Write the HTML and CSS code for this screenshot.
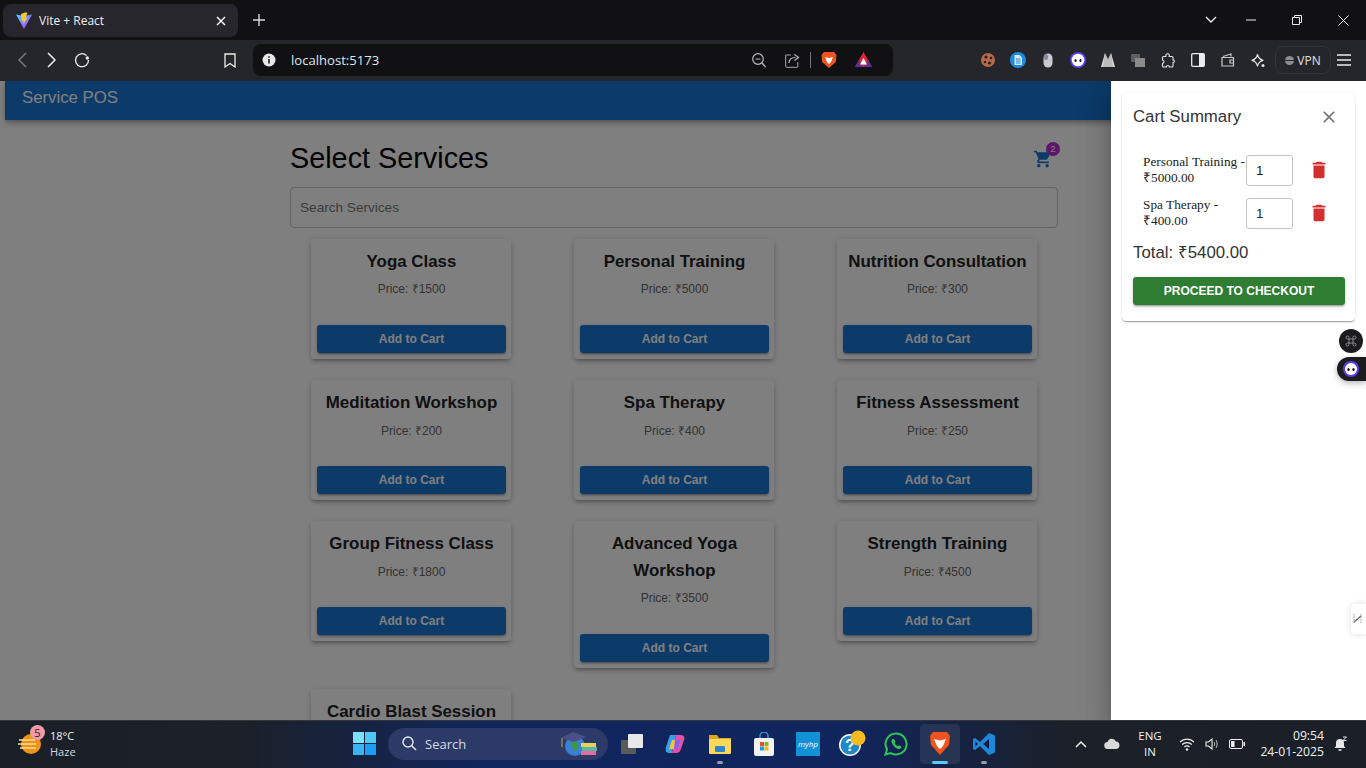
FILE: index.html
```html
<!DOCTYPE html>
<html lang="en">
<head>
    <meta charset="UTF-8">
    <title>Vite + React</title>
    <link rel="stylesheet" href="styles.css">
</head>
<body>

<!-- browser tab strip -->
<div class="tabstrip">
    <div class="tab">
        <svg class="favicon" width="18" height="18" viewBox="0 0 18 18">
            <defs>
                <linearGradient id="viteA" x1="0" y1="0" x2="1" y2="1"><stop offset="0" stop-color="#41d1ff"/><stop offset="1" stop-color="#bd34fe"/></linearGradient>
            </defs>
            <path d="M1 2.500 9 4l8-1.500-8 14.500z" fill="url(#viteA)"/>
            <path d="M10 .5 6 2l.8 7 1.700-.5-.3 3.500L12.500 6l-2 .3L12.500.8z" fill="#ffc928"/>
        </svg>
        <span class="tab-title">Vite + React</span>
        <svg class="tab-close" width="10" height="10" viewBox="0 0 10 10"><path d="M1 1l8 8M9 1l-8 8" stroke="#fff" stroke-width="1.500"/></svg>
    </div>
    <svg class="tab-new" width="12" height="12" viewBox="0 0 12 12"><path d="M6 0v12M0 6h12" stroke="#d8d8d8" stroke-width="1.400"/></svg>
    <div class="win-controls">
        <span class="win-btn win-chevron"><svg width="12" height="8" viewBox="0 0 12 8"><path d="M1 1l5 5 5-5" fill="none" stroke="#eee" stroke-width="1.400"/></svg></span>
        <span class="win-btn win-min"><svg width="10" height="2" viewBox="0 0 10 2"><path d="M0 1h10" stroke="#eee"/></svg></span>
        <span class="win-btn win-max"><svg width="10" height="10" viewBox="0 0 10 10"><path d="M.5 2.500h7v7h-7zM2.500 2.500V.5h7v7h-2" fill="none" stroke="#eee"/></svg></span>
        <span class="win-btn win-close"><svg width="11" height="11" viewBox="0 0 11 11"><path d="M.5.5l10 10M10.500.5l-10 10" stroke="#eee"/></svg></span>
    </div>
</div>

<!-- browser toolbar -->
<div class="toolbar">
    <span class="tool"><svg width="10" height="16" viewBox="0 0 10 16"><path d="M9 1 2 8l7 7" fill="none" stroke="#77787c" stroke-width="1.500"/></svg></span>
    <span class="tool"><svg width="10" height="16" viewBox="0 0 10 16"><path d="M1 1l7 7-7 7" fill="none" stroke="#ececec" stroke-width="1.500"/></svg></span>
    <span class="tool"><svg width="16" height="16" viewBox="0 0 16 16"><path d="M12.500 3.500A6.500 6.500 0 1 0 14.500 8" fill="none" stroke="#ececec" stroke-width="1.300"/><circle cx="13.300" cy="6" r="1.700" fill="#ececec"/></svg></span>
    <span class="tool tool-bookmark"><svg width="12" height="15" viewBox="0 0 12 15"><path d="M1 1h10v13L6 10.500 1 14z" fill="none" stroke="#ececec" stroke-width="1.300"/></svg></span>

    <div class="urlbar">
        <svg class="url-info" width="14" height="14" viewBox="0 0 14 14"><circle cx="7" cy="7" r="6.500" fill="#e8e8e8"/><path d="M7 6v4.500M7 3.300v1.500" stroke="#111" stroke-width="1.500"/></svg>
        <span class="url-text">localhost:5173</span>
        <svg class="url-zoom" width="14" height="15" viewBox="0 0 14 15"><circle cx="6" cy="6" r="5.300" fill="none" stroke="#bbb" stroke-width="1.200"/><path d="M3.500 6h5M10 10l3.500 4" stroke="#bbb" stroke-width="1.200"/></svg>
        <svg class="url-share" width="15" height="15" viewBox="0 0 15 15"><path d="M6 2H1.500A.8.8 0 0 0 .7 3v10.500c0 .5.4.8.8.8h10.500c.5 0 .8-.4.8-.8V9" fill="none" stroke="#aaa" stroke-width="1"/><path d="M4 10c0-4 3-5.500 6.500-5.500M9.500 1.500l4 3-4 3" fill="none" stroke="#bbb" stroke-width="1.200"/></svg>
        <span class="url-sep"></span>
        <svg class="url-brave" width="16" height="18" viewBox="0 0 16 18"><path d="M3 1h10l2.500 3-.7 7L8 17 1.200 11 .5 4z" fill="#f1531f"/><path d="M4 6l4 1 4-1-2 5-2 2-2-2z" fill="#fff"/></svg>
        <svg class="url-rewards" width="17" height="16" viewBox="0 0 17 16"><path d="M8.500 0 17 15H0z" fill="#e0243f"/><path d="M0 15l4-7 4.500 7z" fill="#662d91"/><path d="M17 15l-4-7-4.500 7z" fill="#662d91"/><path d="M8.500 6 12 12.500H5z" fill="#fff"/></svg>
    </div>

    <div class="extensions">
        <span class="tool"><svg width="16" height="16" viewBox="0 0 16 16"><circle cx="8" cy="8" r="7" fill="#b36a48"/><circle cx="6" cy="5" r="1.500" fill="#2c1a12"/><circle cx="11" cy="6" r="1.300" fill="#2c1a12"/><circle cx="5" cy="10" r="1.300" fill="#2c1a12"/><circle cx="9.500" cy="11" r="1.500" fill="#2c1a12"/></svg></span>
        <span class="tool"><svg width="16" height="16" viewBox="0 0 16 16"><circle cx="8" cy="8" r="8" fill="#1f8ad8"/><path d="M4.500 3h5L12 5.500V13H4.500z" fill="#cfe7f8"/><path d="M6 7h4.500M6 9h4.500M6 11h4.500" stroke="#1f8ad8"/></svg></span>
        <span class="tool"><svg width="10" height="15" viewBox="0 0 10 15"><rect x=".5" y=".5" width="9" height="14" rx="4.500" fill="#c9c9cf"/><rect x="1" y="1" width="4" height="6" rx="2" fill="#8a8aa0"/></svg></span>
        <span class="tool"><svg width="16" height="16" viewBox="0 0 16 16"><circle cx="8" cy="8" r="8" fill="#5b3df0"/><circle cx="8" cy="8" r="6.300" fill="#fff"/><ellipse cx="5.500" cy="8.500" rx="1.100" ry="1.500" fill="#1a1a2a"/><ellipse cx="10.500" cy="8.500" rx="1.100" ry="1.500" fill="#1a1a2a"/></svg></span>
        <span class="tool"><svg width="14" height="14" viewBox="0 0 14 14"><path d="M4 0 0 14h6zM10 0l4 14H8z" fill="#d9d9d9"/><path d="M4 0l3 6 3-6 2 14H2z" fill="#bcbcbc"/></svg></span>
        <span class="tool"><svg width="14" height="13" viewBox="0 0 14 13"><rect width="9" height="8" fill="#5e5e5e"/><rect x="4" y="4" width="10" height="9" fill="#8a8a8a"/></svg></span>
        <span class="tool"><svg width="14" height="15" viewBox="0 0 14 15"><path d="M5 1.500c1-1.200 3-1 3.300.6L8.200 3.500H11c.7 0 1 .4 1 1v2.400c1.500-.4 2.200 2.500 0 2.800V13c0 .6-.4 1-1 1H8.300c.2-2-3-2-2.800 0H2.500c-.6 0-1-.4-1-1v-2.500c2-.2 2-3.300 0-3.500V4.500c0-.6.4-1 1-1h2.300z" fill="none" stroke="#e4e4e4" stroke-width="1.100"/></svg></span>
        <span class="tool"><svg width="14" height="14" viewBox="0 0 14 14"><rect x=".7" y=".7" width="12.600" height="12.600" rx="1" fill="none" stroke="#ececec" stroke-width="1.300"/><rect x="8" y="1" width="5" height="12" fill="#ececec"/></svg></span>
        <span class="tool"><svg width="14" height="14" viewBox="0 0 14 14"><path d="M2 3.500 10 1v2.500M1 4.500h11.500V13H1z" fill="none" stroke="#c8c8c8" stroke-width="1.200"/><path d="M13 7H9v3h4" fill="none" stroke="#c8c8c8" stroke-width="1.200"/></svg></span>
        <span class="tool"><svg width="14" height="15" viewBox="0 0 14 15"><path d="M6.500 1.500c.8 3.500 2.500 5 5.500 5.800-3 .8-4.700 2.300-5.500 5.700-.8-3.400-2.500-4.900-5.500-5.700 3-.8 4.700-2.300 5.500-5.800z" fill="none" stroke="#e4e4e4" stroke-width="1.200" stroke-linejoin="round"/><circle cx="12" cy="12.500" r="1.500" fill="#e4e4e4"/></svg></span>
    </div>
    <div class="vpn"><span class="vpn-dot"></span>VPN</div>
    <svg class="hamburger" width="14" height="12" viewBox="0 0 14 12"><path d="M0 1h14M0 6h14M0 11h14" stroke="#ececec" stroke-width="1.300"/></svg>
</div>

<!-- page in the browser -->
<div class="viewport">
    <div class="appbar">Service POS</div>

    <div class="container">
        <div class="page-head">
            <h1>Select Services</h1>
            <div class="cart-btn">
                <svg width="20" height="20" viewBox="0 0 24 24"><path fill="#1976d2" d="M7 18c-1.100 0-1.990.9-1.990 2S5.900 22 7 22s2-.9 2-2-.9-2-2-2zM1 2v2h2l3.600 7.590-1.350 2.450c-.16.28-.25.61-.25.96 0 1.100.9 2 2 2h12v-2H7.420c-.14 0-.25-.11-.25-.25l.03-.12.9-1.630h7.450c.75 0 1.410-.41 1.750-1.030l3.580-6.490c.08-.14.12-.31.12-.48 0-.55-.45-1-1-1H5.210l-.94-2H1zm16 16c-1.100 0-1.990.9-1.990 2s.89 2 1.990 2 2-.9 2-2-.9-2-2-2z"/></svg>
                <span class="cart-badge">2</span>
            </div>
        </div>

        <div class="search-box">Search Services</div>

        <div class="service-grid">
            <div class="service-card"><h3>Yoga Class</h3><p>Price: ₹1500</p><button>Add to Cart</button></div>
            <div class="service-card"><h3>Personal Training</h3><p>Price: ₹5000</p><button>Add to Cart</button></div>
            <div class="service-card"><h3>Nutrition Consultation</h3><p>Price: ₹300</p><button>Add to Cart</button></div>
            <div class="service-card"><h3>Meditation Workshop</h3><p>Price: ₹200</p><button>Add to Cart</button></div>
            <div class="service-card"><h3>Spa Therapy</h3><p>Price: ₹400</p><button>Add to Cart</button></div>
            <div class="service-card"><h3>Fitness Assessment</h3><p>Price: ₹250</p><button>Add to Cart</button></div>
            <div class="service-card"><h3>Group Fitness Class</h3><p>Price: ₹1800</p><button>Add to Cart</button></div>
            <div class="service-card"><h3>Advanced Yoga Workshop</h3><p>Price: ₹3500</p><button>Add to Cart</button></div>
            <div class="service-card"><h3>Strength Training</h3><p>Price: ₹4500</p><button>Add to Cart</button></div>
            <div class="service-card"><h3>Cardio Blast Session</h3></div>
        </div>
    </div>

    <div class="scrim"></div>

    <div class="drawer">
        <div class="cart-card">
            <div class="cart-head">
                <h2>Cart Summary</h2>
                <svg width="20" height="20" viewBox="0 0 24 24"><path fill="#757575" d="M19 6.410 17.590 5 12 10.590 6.410 5 5 6.410 10.590 12 5 17.590 6.410 19 12 13.410 17.590 19 19 17.590 13.410 12z"/></svg>
            </div>
            <div class="cart-item">
                <span class="item-name">Personal Training - ₹5000.00</span>
                <span class="qty">1</span>
                <svg class="item-delete" width="22" height="22" viewBox="0 0 24 24"><path fill="#d32f2f" d="M6 19c0 1.100.9 2 2 2h8c1.100 0 2-.9 2-2V7H6v12zM19 4h-3.500l-1-1h-5l-1 1H5v2h14V4z"/></svg>
            </div>
            <div class="cart-item">
                <span class="item-name">Spa Therapy - ₹400.00</span>
                <span class="qty">1</span>
                <svg class="item-delete" width="22" height="22" viewBox="0 0 24 24"><path fill="#d32f2f" d="M6 19c0 1.100.9 2 2 2h8c1.100 0 2-.9 2-2V7H6v12zM19 4h-3.500l-1-1h-5l-1 1H5v2h14V4z"/></svg>
            </div>
            <div class="cart-total">Total: ₹5400.00</div>
            <button class="checkout">PROCEED TO CHECKOUT</button>
        </div>
    </div>

    <!-- extension widgets floating over the page -->
    <div class="float-cmd"><svg width="12" height="12" viewBox="0 0 12 12"><path d="M4 4h4v4H4zM4 4H2.500a1.500 1.500 0 1 1 1.500-1.500zM8 4V2.500A1.500 1.500 0 1 1 9.500 4zM8 8h1.500A1.500 1.500 0 1 1 8 9.500zM4 8v1.500A1.500 1.500 0 1 1 2.500 8z" fill="none" stroke="#8a8a8a"/></svg></div>
    <div class="float-ghost"><svg width="16" height="16" viewBox="0 0 16 16"><circle cx="8" cy="8" r="8" fill="#5b3df0"/><circle cx="8" cy="8" r="6" fill="#fff"/><ellipse cx="5.500" cy="8.500" rx="1.200" ry="1.600" fill="#14141e"/><ellipse cx="10.500" cy="8.500" rx="1.200" ry="1.600" fill="#14141e"/></svg></div>
    <div class="float-tab"><svg width="9" height="12" viewBox="0 0 9 12"><path d="M1 1v10M8 1v10" stroke="#aaa" stroke-width="1.200" stroke-dasharray="1.500 1"/><path d="M1 9l7-6" stroke="#666" stroke-width="1.300"/></svg></div>
</div>

<!-- windows taskbar -->
<div class="taskbar">
    <div class="weather">
        <span class="weather-icon">
            <svg width="24" height="24" viewBox="0 0 24 24"><circle cx="13" cy="12" r="10" fill="#ee9314"/><path d="M1 8h16M0 12h18M2 16h16" stroke="#f9dc9c" stroke-width="1.500"/></svg>
            <span class="weather-badge">5</span>
        </span>
        <span class="weather-text"><span>18°C</span><span class="weather-sub">Haze</span></span>
    </div>
    <span class="start"><svg width="23" height="23" viewBox="0 0 23 23"><rect width="11" height="11" fill="#7de0fb"/><rect x="12" width="11" height="11" fill="#4fc8f8"/><rect y="12" width="11" height="11" fill="#37b6f6"/><rect x="12" y="12" width="11" height="11" fill="#1a9df2"/></svg></span>
    <div class="task-search">
        <svg width="15" height="15" viewBox="0 0 15 15"><circle cx="6" cy="6" r="5" fill="none" stroke="#e6e8ef" stroke-width="1.400"/><path d="M9.500 9.500 14 14" stroke="#e6e8ef" stroke-width="1.400"/></svg>
        <span>Search</span>
        <svg class="search-art" width="38" height="26" viewBox="0 0 38 26"><circle cx="15" cy="15" r="10" fill="#3b7ed8"/><path d="M10 12l6-2 3 5-4 6-2-4z" fill="#3d9a3a"/><path d="M1 7 13 1l13 5-12 5z" fill="#4a4f8c"/><path d="M2 7v9" stroke="#c8a24a"/><rect x="21" y="12" width="15" height="4" fill="#e8d35a"/><rect x="22" y="16" width="15" height="4" fill="#58b6a2"/><rect x="21" y="20" width="15" height="4" fill="#e86aa0"/></svg>
    </div>
    <div class="task-apps">
        <span class="app"><svg width="22" height="20" viewBox="0 0 22 20"><rect y="6" width="15" height="14" rx="1" fill="#5a5a5a"/><rect x="7" width="15" height="14" rx="1" fill="#e8e8e8"/></svg></span>
        <span class="app"><svg width="24" height="24" viewBox="0 0 24 24"><path d="M6 3h6l-4 18H5C2 21 1 18 2 15z" fill="#37a0e8"/><path d="M12 3h5c3 0 4 3 3 5l-3 9c-1 3-3 4-5 4H8z" fill="#e64fa8"/><path d="M8 8h9l-3 9H5z" fill="#f5c23a"/><path d="M11 8h6l-3 9h-4z" fill="#8a5cf0"/></svg></span>
        <span class="app app-open"><svg width="24" height="24" viewBox="0 0 24 24"><path d="M1 3h8l2 3h12v4H1z" fill="#e0a81e"/><rect x="1" y="7" width="22" height="15" rx="1" fill="#fbd75b"/><rect x="7" y="14" width="10" height="6" rx="1" fill="#2a86c8"/></svg></span>
        <span class="app"><svg width="24" height="24" viewBox="0 0 24 24"><path d="M8 7V4a4 4 0 0 1 8 0v3" fill="none" stroke="#2a9ad8" stroke-width="1.500"/><rect x="2" y="6" width="20" height="18" rx="2" fill="#f2f2f2"/><rect x="8" y="10" width="4" height="4" fill="#e8502a"/><rect x="12.500" y="10" width="4" height="4" fill="#7cb82a"/><rect x="8" y="14.500" width="4" height="4" fill="#1a9ae0"/><rect x="12.500" y="14.500" width="4" height="4" fill="#f5b81e"/></svg></span>
        <span class="app"><span class="myhp">myhp</span></span>
        <span class="app"><svg width="28" height="28" viewBox="0 0 28 28"><circle cx="12" cy="15" r="11" fill="#fff"/><circle cx="12" cy="15" r="9.500" fill="#1f88c8"/><text x="12" y="21" text-anchor="middle" font-size="16" font-weight="700" font-family="Liberation Sans" fill="#fff">?</text><circle cx="20" cy="8" r="7.500" fill="#f5bb1e"/></svg></span>
        <span class="app"><svg width="24" height="24" viewBox="0 0 24 24"><path d="M12 1.500A10.500 10.500 0 0 0 3 17.300L1.500 22.500l5.300-1.400A10.500 10.500 0 1 0 12 1.500z" fill="none" stroke="#2fc45a" stroke-width="2"/><path d="M8.500 7c-1.500 1-1.500 3 .5 6s5 4.500 6.500 4c1.500-.5 2-1.500 1.800-2.500l-2.300-1.300-1 1c-1.500-.4-3-2-3.500-3.500l1-1L10 7z" fill="#2fc45a"/></svg></span>
        <span class="app app-active"><svg width="22" height="25" viewBox="0 0 22 25"><path d="M4 1h14l3 4-1 9-9 10-9-10-1-9z" fill="#f1531f"/><path d="M5 8l6 1.500L17 8l-3 7-3 3-3-3z" fill="#fff"/></svg></span>
        <span class="app app-open"><svg width="24" height="24" viewBox="0 0 24 24"><path d="M17 1 8 10 3 6 1 7v10l2 1 5-4 9 9 6-2.500V3.500z" fill="#1f88d8"/><path d="M17 7v10l-6-5z" fill="#0f1e48"/><path d="M3.500 9.500 6 12l-2.500 2.500z" fill="#0f1e48"/></svg></span>
    </div>
    <div class="tray">
        <svg class="tray-chevron" width="12" height="8" viewBox="0 0 12 8"><path d="M1 7l5-5 5 5" fill="none" stroke="#eee" stroke-width="1.500"/></svg>
        <svg class="tray-cloud" width="16" height="11" viewBox="0 0 16 11"><path d="M4 11a3.500 3.500 0 0 1-.5-7A4.500 4.500 0 0 1 12 3.500 3.800 3.800 0 0 1 12.500 11z" fill="#d8d8d8"/></svg>
        <span class="tray-lang"><span>ENG</span><span>IN</span></span>
        <svg class="tray-wifi" width="16" height="14" viewBox="0 0 16 14"><path d="M1 5a10 10 0 0 1 14 0M3.200 7.500a7 7 0 0 1 9.600 0M5.500 10a3.500 3.500 0 0 1 5 0" fill="none" stroke="#eee" stroke-width="1.200"/><circle cx="8" cy="12.500" r="1.200" fill="#eee"/></svg>
        <svg class="tray-volume" width="14" height="14" viewBox="0 0 14 14"><path d="M1 5h2.500L7 2v10L3.500 9H1z" fill="none" stroke="#eee" stroke-width="1.100"/><path d="M9 5c.8 1.200.8 2.800 0 4M11 3c1.500 2.500 1.500 5.500 0 8" fill="none" stroke="#bbb"/></svg>
        <svg class="tray-battery" width="16" height="10" viewBox="0 0 16 10"><rect x=".5" y=".5" width="13" height="9" rx="1.500" fill="none" stroke="#eee"/><rect x="2" y="2" width="3.500" height="6" fill="#eee"/><rect x="14.500" y="3" width="1.500" height="4" fill="#eee"/></svg>
        <span class="tray-clock"><span>09:54</span><span>24-01-2025</span></span>
        <svg class="tray-bell" width="14" height="16" viewBox="0 0 14 16"><path d="M6 3a4 4 0 0 0-4 4v3l-1.500 2h11L10 10V7a4 4 0 0 0-4-4z" fill="#e8e8e8"/><path d="M4.500 14h3" stroke="#e8e8e8" stroke-width="1.500"/><path d="M9 1h3.500L9 4.500h3.500" fill="none" stroke="#e8e8e8"/></svg>
    </div>
</div>

</body>
</html>
```
FILE: styles.css
```css
body {
    margin: 0;
    width: 1366px;
    height: 768px;
    overflow: hidden;
    font-family: 'Liberation Sans', Arial, sans-serif;
    background: #fff;
}

svg {
    display: block;
    flex-shrink: 0;
}

/* browser tab strip */
.tabstrip {
    height: 40px;
    background: #111113;
    display: flex;
    align-items: center;
    box-sizing: border-box;
    padding-left: 3px;
}

.tab {
    width: 235px;
    height: 33px;
    margin-top: 1px;
    box-sizing: border-box;
    padding: 0 12px 0 12px;
    background: #26262c;
    border-radius: 8px;
    display: flex;
    align-items: center;
}

.tab-title {
    margin-left: 6px;
    color: #f0f0f0;
    font-family: 'Open Sans', sans-serif;
    font-size: 12px;
    flex: 1;
}

.tab-new {
    margin-left: 15px;
}

.win-controls {
    margin-left: auto;
    display: flex;
    align-items: center;
    height: 100%;
}

.win-btn {
    display: flex;
    justify-content: center;
    align-items: center;
    width: 46px;
    height: 40px;
}

.win-chevron {
    margin-right: -6px;
}

/* browser toolbar */
.toolbar {
    height: 41px;
    background: #25262b;
    display: flex;
    align-items: center;
    box-sizing: border-box;
    padding: 0 0 1px 7px;
}

.tool {
    width: 30px;
    height: 30px;
    display: flex;
    justify-content: center;
    align-items: center;
}

.tool-bookmark {
    margin-left: 118px;
}

.urlbar {
    width: 640px;
    height: 32px;
    margin-left: 8px;
    background: #111114;
    border-radius: 8px;
    display: flex;
    align-items: center;
    box-sizing: border-box;
    padding-left: 9px;
}

.url-text {
    margin-left: 15px;
    color: #dbe7f3;
    font-family: 'Open Sans', sans-serif;
    font-size: 13.100px;
    flex: 1;
}

.url-share {
    margin-left: 19px;
}

.url-sep {
    width: 1px;
    height: 16px;
    background: #777;
    margin-left: 10px;
}

.url-brave {
    margin-left: 10px;
}

.url-rewards {
    margin-left: 18px;
    margin-right: 21px;
}

.extensions {
    display: flex;
    margin-left: 80px;
}

.vpn {
    width: 56px;
    height: 28px;
    margin-left: 2px;
    box-sizing: border-box;
    border: 1px solid #33343a;
    border-radius: 8px;
    color: #e0e0e0;
    font-family: 'Open Sans', sans-serif;
    font-size: 12px;
    display: flex;
    align-items: center;
    justify-content: center;
    gap: 3px;
}

.vpn-dot {
    width: 9px;
    height: 9px;
    border-radius: 50%;
    background: linear-gradient(#8b8c94 40%, #25262b 40%, #25262b 60%, #8b8c94 60%);
}

.hamburger {
    margin-left: 6px;
}

/* page */
.viewport {
    height: 639px;
    position: relative;
    overflow: hidden;
    background: #fff;
}

.appbar {
    margin-left: 5px;
    height: 39px;
    box-sizing: border-box;
    padding: 6px 0 0 17px;
    background: #1976d2;
    color: #fff;
    font-size: 16.800px;
    line-height: 22px;
    box-shadow: 0 2px 4px -1px rgba(0, 0, 0, 0.2), 0 4px 5px 0 rgba(0, 0, 0, 0.14), 0 1px 10px 0 rgba(0, 0, 0, 0.12);
}

.container {
    width: 768px;
    margin-left: 290px;
}

.page-head {
    height: 67px;
    display: flex;
    justify-content: space-between;
    align-items: center;
    box-sizing: border-box;
    padding: 10px 5px 0 0;
}

.page-head h1 {
    margin: 0;
    font-size: 28.800px;
    font-weight: 400;
    color: #000;
}

.cart-btn {
    position: relative;
}

.cart-badge {
    position: absolute;
    top: -7px;
    right: -7px;
    width: 14px;
    height: 14px;
    border-radius: 50%;
    background: #c02bd8;
    color: #fff;
    font-size: 9px;
    line-height: 14px;
    text-align: center;
}

.search-box {
    height: 41px;
    box-sizing: border-box;
    padding: 0 9px;
    border: 1px solid #c4c4c4;
    border-radius: 4px;
    color: #777;
    font-size: 13.600px;
    line-height: 39px;
}

.service-grid {
    display: grid;
    grid-template-columns: repeat(3, 200px);
    column-gap: 63px;
    row-gap: 21.400px;
    align-items: start;
    padding: 11px 0 0 21px;
}

.service-card {
    box-sizing: border-box;
    min-height: 119.800px;
    padding: 10px 5px 6px 6px;
    background: #fff;
    border-radius: 4px;
    text-align: center;
    box-shadow: 0 3px 3px -2px rgba(0, 0, 0, 0.2), 0 3px 4px 0 rgba(0, 0, 0, 0.14), 0 1px 8px 0 rgba(0, 0, 0, 0.12);
}

.service-card h3 {
    margin: 0;
    font-size: 16.900px;
    line-height: 26.400px;
    font-weight: 700;
    color: #222;
}

.service-card p {
    margin: 5px 0 26.400px;
    font-size: 12px;
    line-height: 18px;
    color: #666;
}

.service-card button {
    width: 100%;
    height: 28px;
    padding: 0;
    border: none;
    border-radius: 3px;
    background: #1976d2;
    color: #fff;
    font-family: inherit;
    font-size: 12px;
    font-weight: 700;
    box-shadow: 0 3px 1px -2px rgba(0, 0, 0, 0.2), 0 2px 2px 0 rgba(0, 0, 0, 0.14), 0 1px 5px 0 rgba(0, 0, 0, 0.12);
}

.scrim {
    position: absolute;
    top: 0;
    left: 0;
    right: 0;
    bottom: 0;
    background: rgba(0, 0, 0, 0.5);
}

/* cart drawer */
.drawer {
    position: absolute;
    top: 0;
    right: 0;
    bottom: 0;
    width: 255px;
    background: #fff;
    box-sizing: border-box;
    padding: 12px 11px 0;
    box-shadow: 0 8px 10px -5px rgba(0, 0, 0, 0.2), 0 16px 24px 2px rgba(0, 0, 0, 0.14), 0 6px 30px 5px rgba(0, 0, 0, 0.12);
}

.cart-card {
    height: 228px;
    box-sizing: border-box;
    padding: 11px 10px 0 11px;
    border-radius: 4px;
    box-shadow: 0 2px 1px -1px rgba(0, 0, 0, 0.2), 0 1px 1px 0 rgba(0, 0, 0, 0.14), 0 1px 3px 0 rgba(0, 0, 0, 0.12);
}

.cart-head {
    height: 51px;
    display: flex;
    justify-content: space-between;
    padding-right: 6px;
}

.cart-head h2 {
    margin: 0;
    font-size: 16.800px;
    line-height: 26px;
    font-weight: 400;
    color: #333;
}

.cart-head svg {
    margin-top: 3px;
}

.cart-item {
    height: 43px;
    display: flex;
    align-items: flex-start;
    padding-left: 10px;
}

.item-name {
    width: 103px;
    margin-top: -1px;
    font-family: 'Liberation Serif', serif;
    font-size: 13.300px;
    line-height: 16px;
    color: #222;
}

.qty {
    width: 47px;
    height: 31px;
    box-sizing: border-box;
    border: 1px solid #c4c4c4;
    border-radius: 3px;
    padding-left: 9px;
    font-size: 13.300px;
    line-height: 30px;
    color: #222;
}

.item-delete {
    margin: 4px 0 0 15px;
}

.cart-total {
    font-size: 16.800px;
    line-height: 24px;
    color: #333;
}

.checkout {
    display: block;
    width: 212px;
    height: 28px;
    margin-top: 12px;
    padding: 0;
    border: none;
    border-radius: 3px;
    background: #2e7d32;
    color: #fff;
    font-family: inherit;
    font-size: 12px;
    font-weight: 700;
    box-shadow: 0 3px 1px -2px rgba(0, 0, 0, 0.2), 0 2px 2px 0 rgba(0, 0, 0, 0.14), 0 1px 5px 0 rgba(0, 0, 0, 0.12);
}

/* floating extension widgets */
.float-cmd {
    position: absolute;
    top: 248px;
    left: 1339px;
    width: 24px;
    height: 24px;
    border-radius: 50%;
    background: #1c1c1e;
    display: flex;
    justify-content: center;
    align-items: center;
}

.float-ghost {
    position: absolute;
    top: 276px;
    left: 1337px;
    width: 29px;
    height: 24px;
    border-radius: 12px 0 0 12px;
    background: #1c1c1e;
    box-shadow: 0 2px 6px rgba(0, 0, 0, 0.3);
    display: flex;
    align-items: center;
    padding-left: 6px;
    box-sizing: border-box;
}

.float-tab {
    position: absolute;
    top: 523px;
    left: 1351px;
    width: 15px;
    height: 30px;
    border-radius: 4px 0 0 4px;
    background: #fff;
    box-shadow: 0 0 6px rgba(0, 0, 0, 0.15);
    display: flex;
    align-items: center;
    padding-left: 2px;
    box-sizing: border-box;
}

/* windows taskbar */
.taskbar {
    height: 48px;
    box-sizing: border-box;
    padding-bottom: 2px;
    border-top: 1px solid #33363d;
    background: linear-gradient(90deg, #1b2028 0%, #1b2029 18%, #10265e 36%, #10255c 62%, #1b2029 78%, #1b2028 100%);
    display: flex;
    align-items: center;
    color: #f0f0f0;
    font-family: 'Open Sans', sans-serif;
}

.weather {
    width: 344px;
    display: flex;
    align-items: center;
    box-sizing: border-box;
    padding-left: 18px;
    font-size: 11px;
}

.weather-icon {
    position: relative;
    width: 24px;
    height: 24px;
}

.weather-badge {
    position: absolute;
    top: -7px;
    left: 12px;
    width: 15px;
    height: 15px;
    border-radius: 50%;
    background: #f79aa8;
    color: #222;
    font-size: 11px;
    line-height: 15px;
    text-align: center;
}

.weather-text {
    display: flex;
    flex-direction: column;
    margin-left: 8px;
    line-height: 16px;
}

.weather-sub {
    color: #d5d7dc;
}

.start {
    width: 40px;
    display: flex;
    justify-content: center;
}

.task-search {
    width: 220px;
    height: 32px;
    margin-left: 4px;
    box-sizing: border-box;
    padding: 0 10px 0 14px;
    border-radius: 16px;
    background: #2c3a68;
    display: flex;
    align-items: center;
    gap: 8px;
    font-size: 13px;
    color: #d8dbe5;
}

.search-art {
    margin-left: auto;
}

.task-apps {
    display: flex;
    margin-left: 2px;
}

.app {
    width: 44px;
    height: 40px;
    box-sizing: border-box;
    display: flex;
    justify-content: center;
    align-items: center;
    position: relative;
}

.app-open::after {
    content: "";
    position: absolute;
    bottom: 0;
    left: 19px;
    width: 6px;
    height: 3px;
    border-radius: 2px;
    background: #9a9ca6;
}

.app-active {
    width: 40px;
    margin: 0 2px;
    border-radius: 4px;
    background: rgba(255, 255, 255, 0.08);
}

.app-active::after {
    content: "";
    position: absolute;
    bottom: 0;
    left: 12px;
    width: 16px;
    height: 3px;
    border-radius: 2px;
    background: #5cc8f8;
}

.myhp {
    width: 24px;
    height: 24px;
    background: #1291d6;
    color: #fff;
    font-size: 8px;
    font-style: italic;
    line-height: 24px;
    text-align: center;
}

.tray {
    flex: 1;
    display: flex;
    align-items: center;
    position: relative;
    height: 100%;
    font-size: 11.500px;
}

.tray-chevron {
    margin-left: 69px;
}

.tray-cloud {
    margin-left: 17px;
}

.tray-lang {
    width: 32px;
    margin-left: 14px;
    display: flex;
    flex-direction: column;
    align-items: center;
    line-height: 16px;
}

.tray-wifi {
    margin-left: 13px;
}

.tray-volume {
    margin-left: 10px;
}

.tray-battery {
    margin-left: 10px;
}

.tray-clock {
    width: 72px;
    margin-left: 7px;
    display: flex;
    flex-direction: column;
    align-items: flex-end;
    font-size: 12.200px;
    line-height: 16px;
}

.tray-bell {
    margin-left: 10px;
}
```
